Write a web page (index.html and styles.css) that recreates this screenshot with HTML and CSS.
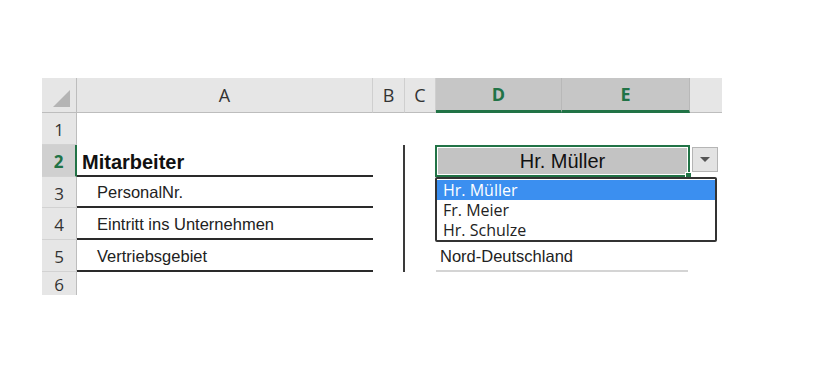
FILE: index.html
```html
<!DOCTYPE html>
<html lang="de">
<head>
<meta charset="utf-8">
<title>Mitarbeiter</title>
<link rel="stylesheet" href="styles.css">
</head>
<body>
<div class="page">
  <div class="sheet">
    <!-- header row -->
    <div class="corner"><span class="tri"></span></div>
    <div class="ch">A</div>
    <div class="ch">B</div>
    <div class="ch">C</div>
    <div class="ch sel">D</div>
    <div class="ch sel">E</div>
    <div class="ch fill"></div>

    <!-- row 1 -->
    <div class="rh">1</div>
    <div class="c"></div><div class="c"></div><div class="c"></div><div class="c span2"></div><div class="c"></div>

    <!-- row 2 -->
    <div class="rh sel">2</div>
    <div class="c title line">Mitarbeiter</div>
    <div class="c vline"></div>
    <div class="c"></div>
    <div class="c span2 active"><div class="active-in">Hr. Müller</div><span class="handle"></span></div>
    <div class="c"></div>

    <!-- row 3 -->
    <div class="rh">3</div>
    <div class="c label line">PersonalNr.</div>
    <div class="c vline"></div>
    <div class="c"></div>
    <div class="c span2"></div>
    <div class="c"></div>

    <!-- row 4 -->
    <div class="rh">4</div>
    <div class="c label line">Eintritt ins Unternehmen</div>
    <div class="c vline"></div>
    <div class="c"></div>
    <div class="c span2"></div>
    <div class="c"></div>

    <!-- row 5 -->
    <div class="rh">5</div>
    <div class="c label line">Vertriebsgebiet</div>
    <div class="c vline"></div>
    <div class="c"></div>
    <div class="c span2 value">Nord-Deutschland</div>
    <div class="c"></div>

    <!-- row 6 -->
    <div class="rh last">6</div>
    <div class="c"></div><div class="c"></div><div class="c"></div><div class="c span2"></div><div class="c"></div>

    <button class="dd-btn" type="button"><span class="arrow"></span></button>
    <ul class="dd-list">
      <li class="on">Hr. Müller</li>
      <li>Fr. Meier</li>
      <li>Hr. Schulze</li>
    </ul>
  </div>
</div>
</body>
</html>
```

FILE: styles.css
```css
html, body {
  margin: 0;
  padding: 0;
  background: #fff;
}

.page {
  width: 820px;
  height: 390px;
  padding: 78px 0 0 42px;
  box-sizing: border-box;
}

.sheet {
  position: relative;
  display: grid;
  grid-template-columns: 35px 296px 32px 31px 126px 128px 32px;
  grid-template-rows: 35px 32px 32px 31px 32px 32px 23px;
  width: 680px;
  font-family: "Liberation Sans", Arial, sans-serif;
  color: #222;
}

.corner {
  background: #e6e6e6;
  border-right: 1px solid #bdbdbd;
  border-bottom: 1px solid #bdbdbd;
  position: relative;
}
.tri {
  position: absolute;
  right: 6px;
  bottom: 5px;
  width: 0;
  height: 0;
  border-left: 17px solid transparent;
  border-bottom: 17px solid #b4b4b4;
}

.ch {
  background: #e6e6e6;
  border-right: 1px solid #cfcfcf;
  border-bottom: 1px solid #bdbdbd;
  display: flex;
  align-items: center;
  justify-content: center;
  font-family: "Open Sans", "Liberation Sans", sans-serif;
  font-size: 18px;
  color: #333;
}
.ch.sel {
  background: #c6c6c6;
  color: #217346;
  font-weight: 700;
  border-right-color: #b8b8b8;
  border-bottom: 3px solid #217346;
}
.ch.fill {
  border-right: none;
}

.rh {
  background: #e6e6e6;
  border-right: 1px solid #bdbdbd;
  border-bottom: 1px solid #d2d2d2;
  display: flex;
  align-items: center;
  justify-content: center;
  font-family: "Open Sans", "Liberation Sans", sans-serif;
  font-size: 17px;
  color: #333;
  padding-top: 2px;
  box-sizing: border-box;
}
.rh.sel {
  background: #d0d0d0;
  color: #217346;
  font-weight: 700;
  border-right: 2px solid #217346;
}
.rh.last {
  border-bottom: none;
  align-items: flex-start;
  padding-top: 1px;
}

.c {
  background: #fff;
  display: flex;
  align-items: center;
  box-sizing: border-box;
  min-width: 0;
  white-space: nowrap;
}
.span2 {
  grid-column: span 2;
}

.line {
  border-bottom: 2px solid #2a2a2a;
}
.title {
  font-weight: 700;
  font-size: 20px;
  padding: 4px 0 0 5px;
  color: #111;
}
.label {
  font-size: 16.5px;
  padding: 2px 0 0 20px;
  color: #222;
}
.vline {
  border-right: 2px solid #3a3a3a;
}

.active {
  position: relative;
  border: 2px solid #217346;
  padding: 1px;
  margin-left: -1px;
}
.active-in {
  flex: 1;
  align-self: stretch;
  background: #c3c3c3;
  display: flex;
  align-items: center;
  justify-content: center;
  font-size: 20px;
  color: #111;
  padding-top: 1px;
}
.handle {
  position: absolute;
  right: -4px;
  bottom: -4px;
  width: 5px;
  height: 5px;
  background: #217346;
  border: 1px solid #fff;
}

.value {
  font-size: 16.5px;
  padding: 2px 0 0 4px;
  margin-right: 2px;
  border-bottom: 2px solid #d4d4d4;
}

.dd-btn {
  position: absolute;
  left: 650px;
  top: 69px;
  width: 26px;
  height: 25px;
  margin: 0;
  padding: 0;
  background: #e3e3e3;
  border: 1px solid #b5b5b5;
  display: flex;
  align-items: center;
  justify-content: center;
}
.arrow {
  width: 0;
  height: 0;
  border-left: 5px solid transparent;
  border-right: 5px solid transparent;
  border-top: 5px solid #555;
}

.dd-list {
  position: absolute;
  left: 393px;
  top: 99px;
  width: 282px;
  height: 65px;
  margin: 0;
  padding: 1px 0 0 0;
  list-style: none;
  background: #fff;
  border: 2px solid #333;
  border-radius: 2px;
  box-sizing: border-box;
  font-family: "Open Sans", "Liberation Sans", sans-serif;
  font-size: 16px;
  font-weight: 500;
  line-height: 20px;
  color: #222;
}
.dd-list li {
  padding-left: 6px;
  height: 20px;
}
.dd-list li.on {
  background: #3b8ff0;
  color: #fff;
}
```
